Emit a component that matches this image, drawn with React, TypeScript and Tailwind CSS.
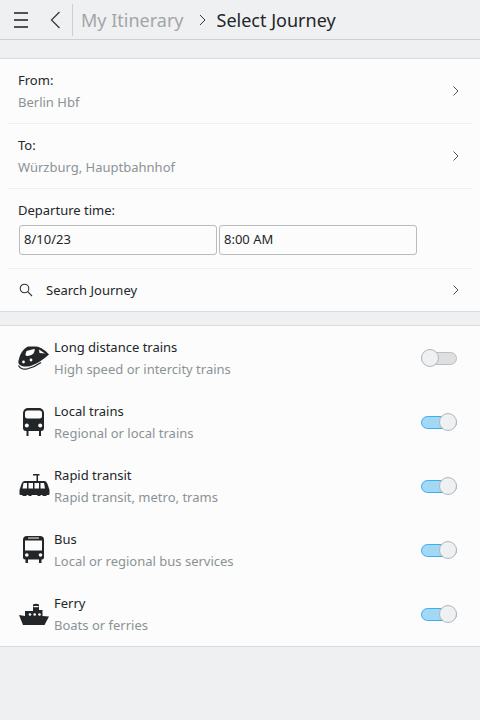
const font = { fontFamily: '"Noto Sans", sans-serif' }

function Chevron() {
  return (
    <svg viewBox="0 0 14 14" className="h-[14px] w-[14px]" fill="none" stroke="#4d5357" strokeWidth="1">
      <path d="M4.500 2.500 9 7l-4.500 4.500" />
    </svg>
  )
}

function LinkRow({ label, value }: { label: string; value: string }) {
  return (
    <div className="mx-2 flex h-[65px] items-center justify-between border-b border-[#eeeff0] pl-[10px] pr-[9px]">
      <div className="flex flex-col gap-[4px]">
        <div className="text-[13px] leading-[18px] text-[#232629]">{label}</div>
        <div className="text-[13px] leading-[18px] text-[#8b9296]">{value}</div>
      </div>
      <Chevron />
    </div>
  )
}

/* the transport icons share one 40x40 box */
function Icon({ children }: { children: React.ReactNode }) {
  return (
    <svg viewBox="1 -1 40 40" className="h-[40px] w-[40px]" fill="#232629">
      {children}
    </svg>
  )
}

function LongDistanceIcon() {
  return (
    <Icon>
      <g transform="translate(1 0)">
        <path d="M13 7.500H21C26 8 31 12 34 15.500 29 20 23 24 18 26 13 28 8 28 5 26 3 25 3 22 4 20 5 15 8 10 13 7.500Z" />
        <path fill="#fcfcfc" d="M11.500 12 19 10Q20.500 10 19.500 12L18.500 14.500Q17 16 13 17 10 17.500 10.500 15Z" />
        <path fill="#fcfcfc" d="M24 10.500 30 14.500 24.500 14Z" />
        <circle cx="8.500" cy="23" r="1.400" fill="#fcfcfc" />
        <circle cx="16" cy="21" r="1.400" fill="#fcfcfc" />
        <path fill="none" stroke="#232629" strokeWidth="1.200" d="M3.500 26.500Q6 31 12 30 20 28 26 23.500" />
      </g>
    </Icon>
  )
}

function LocalIcon() {
  return (
    <Icon>
      <path d="M14 5H25A5 5 0 0 1 30 10V25A3 3 0 0 1 27 28H12A3 3 0 0 1 9 25V10A5 5 0 0 1 14 5Z" />
      <path d="M12.500 27H14.500V33H12.500ZM25 27H27V33H25Z" />
      <rect x="11" y="7.500" width="17" height="8" rx="2.500" fill="#fcfcfc" />
      <circle cx="12.800" cy="22.500" r="2" fill="#fcfcfc" />
      <circle cx="26.200" cy="22.500" r="2" fill="#fcfcfc" />
    </Icon>
  )
}

function RapidIcon() {
  return (
    <Icon>
      <g transform="translate(0.500 1)">
        <path d="M18.500 6H25V7.500H23.500V13.500H22V7.500H18.500Z" />
        <path d="M10 13H30Q32 13 33 16L35 22V26Q35 27 34 27H6Q5 27 5 26V22L7 16Q8 13 10 13Z" />
        <path d="M8 27H12V28H8ZM14 27H17V28H14ZM23 27H26V28H23ZM28 27H32V28H28Z" />
        <path fill="#fcfcfc" d="M9 15H12.500V20.500H8ZM14 15H18.500V20.500H14ZM20 15H24.500V20.500H20ZM26 15H29.500L30.500 20.500H26Z" />
      </g>
    </Icon>
  )
}

function BusIcon() {
  return (
    <Icon>
      <path d="M13 5H26A4 4 0 0 1 30 9V26.500Q30 28.500 28 28.500H11Q9 28.500 9 26.500V9A4 4 0 0 1 13 5Z" />
      <path d="M11.500 28H14V32H11.500ZM25 28H27.500V32H25Z" />
      <path fill="#fcfcfc" d="M14 6.500H25V7.500H14ZM11 9.500H28V19.500H11Z" />
      <circle cx="12.800" cy="24" r="1.800" fill="#fcfcfc" />
      <circle cx="26.500" cy="24" r="1.800" fill="#fcfcfc" />
    </Icon>
  )
}

function FerryIcon() {
  return (
    <Icon>
      <path d="M5 20 11 21V16H19V9.500Q22 8 25 9.500V15H28.500V21L35 21.500 30.500 30H9Z" />
      <circle cx="16" cy="19.500" r="1.300" fill="#fcfcfc" />
      <circle cx="20.700" cy="19.500" r="1.300" fill="#fcfcfc" />
      <circle cx="25.500" cy="19.500" r="1.300" fill="#fcfcfc" />
      <rect x="19.500" y="11" width="5" height="1.200" fill="#fcfcfc" />
    </Icon>
  )
}

function Toggle({ on }: { on: boolean }) {
  return (
    <div className="relative h-[13px] w-[36px]">
      <div
        className={
          on
            ? "h-[13px] w-[36px] rounded-full border border-[#3daee9] bg-[#a2d7f5]"
            : "h-[13px] w-[36px] rounded-full border border-[#bcbebf] bg-[#dddfe0]"
        }
      />
      <div
        className={
          on
            ? "absolute right-0 top-[-3px] h-[18px] w-[18px] rounded-full border border-[#b5b7b9] bg-[#eff0f1]"
            : "absolute left-0 top-[-3px] h-[18px] w-[18px] rounded-full border border-[#b5b7b9] bg-[#eff0f1]"
        }
      />
    </div>
  )
}

const modes = [
  { title: "Long distance trains", sub: "High speed or intercity trains", icon: <LongDistanceIcon />, on: false },
  { title: "Local trains", sub: "Regional or local trains", icon: <LocalIcon />, on: true },
  { title: "Rapid transit", sub: "Rapid transit, metro, trams", icon: <RapidIcon />, on: true },
  { title: "Bus", sub: "Local or regional bus services", icon: <BusIcon />, on: true },
  { title: "Ferry", sub: "Boats or ferries", icon: <FerryIcon />, on: true },
]

export default function App() {
  return (
    <div className="h-[720px] w-[480px] overflow-hidden bg-[#eff0f1]" style={font}>
      <header className="flex h-[40px] items-center border-b border-[#cdd0d2]">
        <div className="ml-[14px] flex w-[14px] flex-col gap-[5px]">
          <div className="h-[2px] bg-[#4d5357]" />
          <div className="h-[2px] bg-[#4d5357]" />
          <div className="h-[2px] bg-[#4d5357]" />
        </div>
        <svg viewBox="0 0 11 18" className="ml-[22px] h-[18px] w-[11px]" fill="none" stroke="#31363b" strokeWidth="1.200">
          <path d="M9.500 1 1.500 9l8 8" />
        </svg>
        <div className="ml-[11px] h-[32px] w-px bg-[#cdd0d2]" />
        <span className="ml-[8px] text-[18px] leading-[24px] text-[#a1a6a9]">My Itinerary</span>
        <svg viewBox="0 0 7 12" className="ml-[15px] h-[12px] w-[7px]" fill="none" stroke="#31363b" strokeWidth="1">
          <path d="M1 1 6 6 1 11" />
        </svg>
        <span className="ml-[11px] text-[18px] leading-[24px] text-[#232629]">Select Journey</span>
      </header>

      <section className="mt-[18px] border-y border-[#d9dbdc] bg-[#fcfcfc]">
        <LinkRow label="From:" value="Berlin Hbf" />
        <LinkRow label="To:" value="Würzburg, Hauptbahnhof" />
        <div className="mx-2 h-[80px] border-b border-[#eeeff0] pl-[10px] pt-[12px]">
          <div className="text-[13px] leading-[18px] text-[#232629]">Departure time:</div>
          <div className="ml-px mt-[6px] flex gap-[2px]">
            <div className="flex h-[30px] w-[198px] items-center rounded-[3px] border border-[#b9bbbd] bg-[#fcfcfc] pl-[4px] text-[13px] text-[#232629]">8/10/23</div>
            <div className="flex h-[30px] w-[198px] items-center rounded-[3px] border border-[#b9bbbd] bg-[#fcfcfc] pl-[4px] text-[13px] text-[#232629]">8:00 AM</div>
          </div>
        </div>
        <div className="flex h-[42px] items-center justify-between pl-[19px] pr-[17px]">
          <div className="flex items-center">
            <svg viewBox="0 0 14 14" className="h-[14px] w-[14px]" fill="none" stroke="#31363b" strokeWidth="1.100">
              <circle cx="5.500" cy="5.500" r="4.300" />
              <path d="M8.700 8.700 13 13" />
            </svg>
            <span className="ml-[13px] mt-[1px] text-[13px] text-[#232629]">Search Journey</span>
          </div>
          <Chevron />
        </div>
      </section>

      <section className="mt-[13px] border-y border-[#d9dbdc] bg-[#fcfcfc]">
        {modes.map((m) => (
          <div key={m.title} className="flex h-[64px] items-center pl-[15px] pr-[23px]">
            <div className="w-[39px]">{m.icon}</div>
            <div className="flex-1">
              <div className="text-[13px] leading-[18px] text-[#232629]">{m.title}</div>
              <div className="mt-[4px] text-[13px] leading-[18px] text-[#8b9296]">{m.sub}</div>
            </div>
            <Toggle on={m.on} />
          </div>
        ))}
      </section>
    </div>
  )
}
